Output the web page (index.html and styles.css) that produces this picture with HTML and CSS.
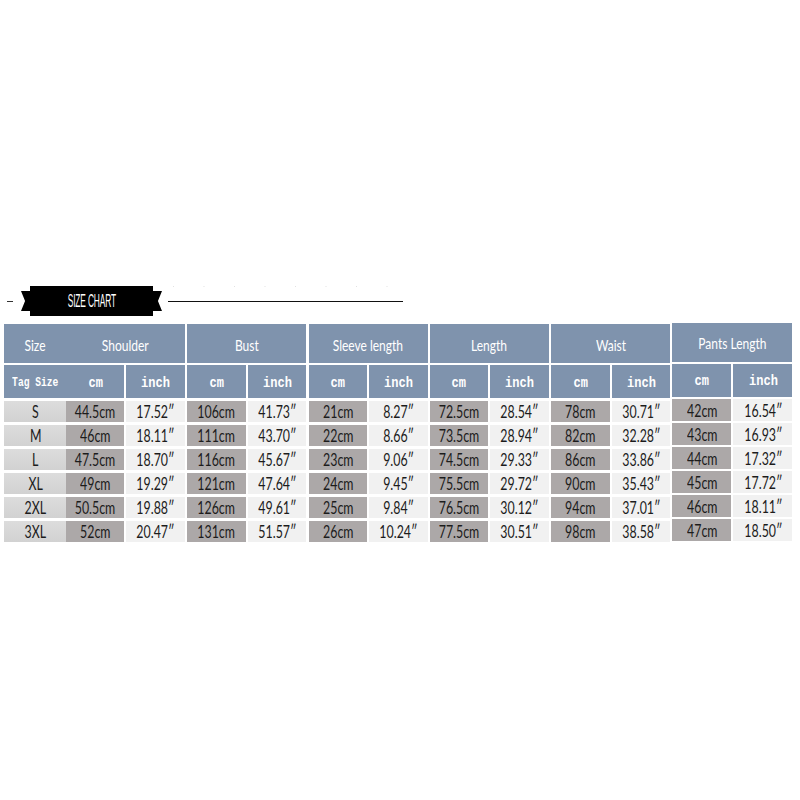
FILE: index.html
```html
<!DOCTYPE html>
<html>
<head>
<meta charset="utf-8">
<link rel="stylesheet" href="styles.css">
</head>
<body>
<div class="page">
  <div class="title">
    <div class="dash"></div>
    <div class="tail tail-l"></div>
    <div class="box"><span class="tt">SIZE CHART</span></div>
    <div class="tail tail-r"></div>
    <div class="rulewrap">
      <div class="dots"></div>
      <div class="rule"></div>
    </div>
  </div>

  <div class="table">
    <div class="grp size">
      <div class="h1"><span class="t">Size</span></div>
      <div class="h2"><span class="m sm">Tag Size</span></div>
      <div class="sz"><span class="t">S</span></div>
      <div class="sz"><span class="t">M</span></div>
      <div class="sz"><span class="t">L</span></div>
      <div class="sz"><span class="t">XL</span></div>
      <div class="sz"><span class="t">2XL</span></div>
      <div class="sz"><span class="t">3XL</span></div>
    </div>

    <div class="grp">
      <div class="h1 span"><span class="t">Shoulder</span></div>
      <div class="h2"><span class="m">cm</span></div><div class="h2"><span class="m">inch</span></div>
      <div class="cm"><span class="t">44.5cm</span></div><div class="in"><span class="t">17.52″</span></div>
      <div class="cm"><span class="t">46cm</span></div><div class="in"><span class="t">18.11″</span></div>
      <div class="cm"><span class="t">47.5cm</span></div><div class="in"><span class="t">18.70″</span></div>
      <div class="cm"><span class="t">49cm</span></div><div class="in"><span class="t">19.29″</span></div>
      <div class="cm"><span class="t">50.5cm</span></div><div class="in"><span class="t">19.88″</span></div>
      <div class="cm"><span class="t">52cm</span></div><div class="in"><span class="t">20.47″</span></div>
    </div>

    <div class="grp">
      <div class="h1 span"><span class="t">Bust</span></div>
      <div class="h2"><span class="m">cm</span></div><div class="h2"><span class="m">inch</span></div>
      <div class="cm"><span class="t">106cm</span></div><div class="in"><span class="t">41.73″</span></div>
      <div class="cm"><span class="t">111cm</span></div><div class="in"><span class="t">43.70″</span></div>
      <div class="cm"><span class="t">116cm</span></div><div class="in"><span class="t">45.67″</span></div>
      <div class="cm"><span class="t">121cm</span></div><div class="in"><span class="t">47.64″</span></div>
      <div class="cm"><span class="t">126cm</span></div><div class="in"><span class="t">49.61″</span></div>
      <div class="cm"><span class="t">131cm</span></div><div class="in"><span class="t">51.57″</span></div>
    </div>

    <div class="grp">
      <div class="h1 span"><span class="t">Sleeve length</span></div>
      <div class="h2"><span class="m">cm</span></div><div class="h2"><span class="m">inch</span></div>
      <div class="cm"><span class="t">21cm</span></div><div class="in"><span class="t">8.27″</span></div>
      <div class="cm"><span class="t">22cm</span></div><div class="in"><span class="t">8.66″</span></div>
      <div class="cm"><span class="t">23cm</span></div><div class="in"><span class="t">9.06″</span></div>
      <div class="cm"><span class="t">24cm</span></div><div class="in"><span class="t">9.45″</span></div>
      <div class="cm"><span class="t">25cm</span></div><div class="in"><span class="t">9.84″</span></div>
      <div class="cm"><span class="t">26cm</span></div><div class="in"><span class="t">10.24″</span></div>
    </div>

    <div class="grp">
      <div class="h1 span"><span class="t">Length</span></div>
      <div class="h2"><span class="m">cm</span></div><div class="h2"><span class="m">inch</span></div>
      <div class="cm"><span class="t">72.5cm</span></div><div class="in"><span class="t">28.54″</span></div>
      <div class="cm"><span class="t">73.5cm</span></div><div class="in"><span class="t">28.94″</span></div>
      <div class="cm"><span class="t">74.5cm</span></div><div class="in"><span class="t">29.33″</span></div>
      <div class="cm"><span class="t">75.5cm</span></div><div class="in"><span class="t">29.72″</span></div>
      <div class="cm"><span class="t">76.5cm</span></div><div class="in"><span class="t">30.12″</span></div>
      <div class="cm"><span class="t">77.5cm</span></div><div class="in"><span class="t">30.51″</span></div>
    </div>

    <div class="grp">
      <div class="h1 span"><span class="t">Waist</span></div>
      <div class="h2"><span class="m">cm</span></div><div class="h2"><span class="m">inch</span></div>
      <div class="cm"><span class="t">78cm</span></div><div class="in"><span class="t">30.71″</span></div>
      <div class="cm"><span class="t">82cm</span></div><div class="in"><span class="t">32.28″</span></div>
      <div class="cm"><span class="t">86cm</span></div><div class="in"><span class="t">33.86″</span></div>
      <div class="cm"><span class="t">90cm</span></div><div class="in"><span class="t">35.43″</span></div>
      <div class="cm"><span class="t">94cm</span></div><div class="in"><span class="t">37.01″</span></div>
      <div class="cm"><span class="t">98cm</span></div><div class="in"><span class="t">38.58″</span></div>
    </div>

    <div class="grp pants">
      <div class="h1 span"><span class="t">Pants Length</span></div>
      <div class="h2"><span class="m">cm</span></div><div class="h2"><span class="m">inch</span></div>
      <div class="cm"><span class="t">42cm</span></div><div class="in"><span class="t">16.54″</span></div>
      <div class="cm"><span class="t">43cm</span></div><div class="in"><span class="t">16.93″</span></div>
      <div class="cm"><span class="t">44cm</span></div><div class="in"><span class="t">17.32″</span></div>
      <div class="cm"><span class="t">45cm</span></div><div class="in"><span class="t">17.72″</span></div>
      <div class="cm"><span class="t">46cm</span></div><div class="in"><span class="t">18.11″</span></div>
      <div class="cm"><span class="t">47cm</span></div><div class="in"><span class="t">18.50″</span></div>
    </div>
  </div>
</div>
</body>
</html>
```

FILE: styles.css
```css
html, body {
  margin: 0;
  padding: 0;
  background: #ffffff;
}

.page {
  width: 800px;
  height: 800px;
  padding-top: 286px;
  box-sizing: border-box;
  font-family: Lato, "Open Sans", "Liberation Sans", sans-serif;
}

/* ---------- title ribbon ---------- */
.title {
  display: flex;
  align-items: center;
  height: 30px;
  padding-left: 7px;
}

.dash {
  width: 6px;
  height: 1px;
  background: #333;
  margin-right: 8px;
}

.tail {
  width: 9px;
  height: 20px;
  background: #000;
}

.tail-l {
  clip-path: polygon(0 0, 100% 0, 100% 100%, 0 100%, 45% 50%);
}

.tail-r {
  clip-path: polygon(0 0, 100% 0, 55% 50%, 100% 100%, 0 100%);
}

.box {
  width: 123px;
  height: 30px;
  background: #000;
  display: flex;
  align-items: center;
  justify-content: center;
}

.tt {
  display: inline-block;
  color: #fff;
  font-family: "Liberation Sans", Arial, sans-serif;
  font-size: 19px;
  letter-spacing: -0.3px;
  transform: scaleX(0.44);
  white-space: nowrap;
}

.rulewrap {
  display: flex;
  flex-direction: column;
  justify-content: space-between;
  height: 30px;
  margin-left: 6px;
}

.dots {
  width: 236px;
  height: 1px;
  background-image: linear-gradient(to right, #e2e2e2 1px, transparent 1px);
  background-size: 30.5px 1px;
  background-position: 5px 0;
}

.rule {
  width: 235px;
  height: 1.5px;
  background: #111;
  margin-bottom: 14px;
}

/* ---------- table ---------- */
.table {
  display: flex;
  gap: 2.3px;
  margin-top: 8px;
  padding-left: 4px;
}

.grp {
  width: 119px;
  display: grid;
  grid-template-columns: 1fr 1fr;
  grid-template-rows: 39px 33px repeat(6, 21.7px);
  column-gap: 2px;
  row-gap: 2.3px;
}

.grp.size {
  width: 59.7px;
  grid-template-columns: 1fr;
}

.grp.pants {
  width: 120px;
  margin-top: -1.5px;
}

.grp > div {
  display: flex;
  align-items: center;
  justify-content: center;
  overflow: visible;
}

.span {
  grid-column: span 2;
}

.h1, .h2 {
  background: #7f93ad;
  color: #fff;
}

.sz {
  background: linear-gradient(#dcdcdc, #d2d2d2);
}

.cm {
  background: #aca8a8;
}

.in {
  background: #f1f1f1;
}

.t {
  display: inline-block;
  font-size: 16.5px;
  transform: scaleX(0.75);
  white-space: nowrap;
  color: #1c1c1c;
  padding-top: 2px;
}

.h1 .t {
  color: #fff;
  font-size: 16px;
  padding-top: 1px;
}

.m {
  display: inline-block;
  font-family: "Liberation Mono", "Courier New", monospace;
  font-weight: bold;
  font-size: 14.5px;
  transform: scaleX(0.83);
  white-space: nowrap;
  color: #fff;
  padding-top: 2px;
}

.m.sm {
  font-size: 13px;
  transform: scaleX(0.74);
}
```
